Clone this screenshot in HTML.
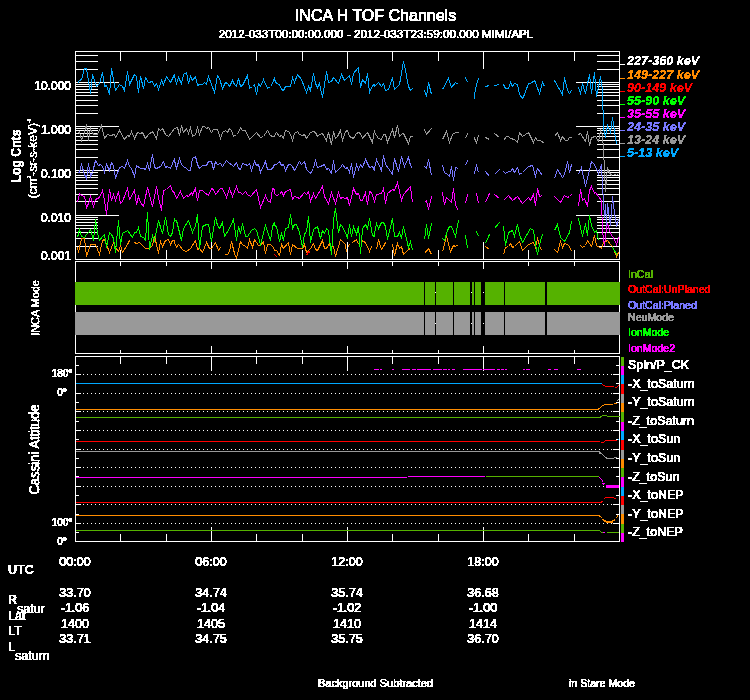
<!DOCTYPE html>
<html lang="en">
<head>
<meta charset="utf-8">
<title>INCA H TOF Channels</title>
<style>
html,body{margin:0;padding:0;background:#000;}
body{width:750px;height:700px;overflow:hidden;}
svg{display:block;shape-rendering:crispEdges;text-rendering:optimizeSpeed;}
text{font-family:"Liberation Sans",sans-serif;fill:#fff;stroke:#fff;stroke-width:0.6px;filter:url(#na);}
.t16{font-size:16px;}
.t125{font-size:12.5px;}
.t13{font-size:13.1px;}
.t12{font-size:12px;}
.t115{font-size:11.7px;}
.t11{font-size:11px;}
.t105{font-size:10.9px;}
.t10{font-size:10px;}
.t106{font-size:10.6px;}
.rot{stroke-width:0.3px;}
.b12{font-size:12.2px;font-weight:bold;stroke-width:0.2px;}
.bi{font-size:12.6px;font-weight:bold;font-style:italic;stroke-width:0.15px;}
</style>
</head>
<body>
<svg width="750" height="700" viewBox="0 0 750 700">
<defs><filter id="na" x="-5%" y="-20%" width="110%" height="140%" color-interpolation-filters="sRGB"><feComponentTransfer><feFuncA type="discrete" tableValues="0 0 1 1 1"/></feComponentTransfer></filter></defs>
<rect x="0" y="0" width="750" height="700" fill="#000"/>
<g id="p1">
<rect x="75" y="246" width="23" height="1" fill="#ffffff"/>
<rect x="597" y="246" width="23" height="1" fill="#ffffff"/>
<rect x="75" y="238" width="23" height="1" fill="#ffffff"/>
<rect x="597" y="238" width="23" height="1" fill="#ffffff"/>
<rect x="75" y="232" width="23" height="1" fill="#ffffff"/>
<rect x="597" y="232" width="23" height="1" fill="#ffffff"/>
<rect x="75" y="228" width="23" height="1" fill="#ffffff"/>
<rect x="597" y="228" width="23" height="1" fill="#ffffff"/>
<rect x="75" y="225" width="23" height="1" fill="#ffffff"/>
<rect x="597" y="225" width="23" height="1" fill="#ffffff"/>
<rect x="75" y="222" width="23" height="1" fill="#ffffff"/>
<rect x="597" y="222" width="23" height="1" fill="#ffffff"/>
<rect x="75" y="219" width="23" height="1" fill="#ffffff"/>
<rect x="597" y="219" width="23" height="1" fill="#ffffff"/>
<rect x="75" y="217" width="23" height="1" fill="#ffffff"/>
<rect x="597" y="217" width="23" height="1" fill="#ffffff"/>
<rect x="75" y="215" width="44" height="1" fill="#ffffff"/>
<rect x="576" y="215" width="44" height="1" fill="#ffffff"/>
<rect x="75" y="201" width="23" height="1" fill="#ffffff"/>
<rect x="597" y="201" width="23" height="1" fill="#ffffff"/>
<rect x="75" y="194" width="23" height="1" fill="#ffffff"/>
<rect x="597" y="194" width="23" height="1" fill="#ffffff"/>
<rect x="75" y="188" width="23" height="1" fill="#ffffff"/>
<rect x="597" y="188" width="23" height="1" fill="#ffffff"/>
<rect x="75" y="184" width="23" height="1" fill="#ffffff"/>
<rect x="597" y="184" width="23" height="1" fill="#ffffff"/>
<rect x="75" y="180" width="23" height="1" fill="#ffffff"/>
<rect x="597" y="180" width="23" height="1" fill="#ffffff"/>
<rect x="75" y="177" width="23" height="1" fill="#ffffff"/>
<rect x="597" y="177" width="23" height="1" fill="#ffffff"/>
<rect x="75" y="175" width="23" height="1" fill="#ffffff"/>
<rect x="597" y="175" width="23" height="1" fill="#ffffff"/>
<rect x="75" y="172" width="23" height="1" fill="#ffffff"/>
<rect x="597" y="172" width="23" height="1" fill="#ffffff"/>
<rect x="75" y="170" width="44" height="1" fill="#ffffff"/>
<rect x="576" y="170" width="44" height="1" fill="#ffffff"/>
<rect x="75" y="157" width="23" height="1" fill="#ffffff"/>
<rect x="597" y="157" width="23" height="1" fill="#ffffff"/>
<rect x="75" y="149" width="23" height="1" fill="#ffffff"/>
<rect x="597" y="149" width="23" height="1" fill="#ffffff"/>
<rect x="75" y="144" width="23" height="1" fill="#ffffff"/>
<rect x="597" y="144" width="23" height="1" fill="#ffffff"/>
<rect x="75" y="140" width="23" height="1" fill="#ffffff"/>
<rect x="597" y="140" width="23" height="1" fill="#ffffff"/>
<rect x="75" y="136" width="23" height="1" fill="#ffffff"/>
<rect x="597" y="136" width="23" height="1" fill="#ffffff"/>
<rect x="75" y="133" width="23" height="1" fill="#ffffff"/>
<rect x="597" y="133" width="23" height="1" fill="#ffffff"/>
<rect x="75" y="130" width="23" height="1" fill="#ffffff"/>
<rect x="597" y="130" width="23" height="1" fill="#ffffff"/>
<rect x="75" y="128" width="23" height="1" fill="#ffffff"/>
<rect x="597" y="128" width="23" height="1" fill="#ffffff"/>
<rect x="75" y="126" width="44" height="1" fill="#ffffff"/>
<rect x="576" y="126" width="44" height="1" fill="#ffffff"/>
<rect x="75" y="113" width="23" height="1" fill="#ffffff"/>
<rect x="597" y="113" width="23" height="1" fill="#ffffff"/>
<rect x="75" y="105" width="23" height="1" fill="#ffffff"/>
<rect x="597" y="105" width="23" height="1" fill="#ffffff"/>
<rect x="75" y="100" width="23" height="1" fill="#ffffff"/>
<rect x="597" y="100" width="23" height="1" fill="#ffffff"/>
<rect x="75" y="95" width="23" height="1" fill="#ffffff"/>
<rect x="597" y="95" width="23" height="1" fill="#ffffff"/>
<rect x="75" y="92" width="23" height="1" fill="#ffffff"/>
<rect x="597" y="92" width="23" height="1" fill="#ffffff"/>
<rect x="75" y="89" width="23" height="1" fill="#ffffff"/>
<rect x="597" y="89" width="23" height="1" fill="#ffffff"/>
<rect x="75" y="86" width="23" height="1" fill="#ffffff"/>
<rect x="597" y="86" width="23" height="1" fill="#ffffff"/>
<rect x="75" y="84" width="23" height="1" fill="#ffffff"/>
<rect x="597" y="84" width="23" height="1" fill="#ffffff"/>
<rect x="75" y="82" width="44" height="1" fill="#ffffff"/>
<rect x="576" y="82" width="44" height="1" fill="#ffffff"/>
<rect x="75" y="69" width="23" height="1" fill="#ffffff"/>
<rect x="597" y="69" width="23" height="1" fill="#ffffff"/>
<rect x="75" y="61" width="23" height="1" fill="#ffffff"/>
<rect x="597" y="61" width="23" height="1" fill="#ffffff"/>
<rect x="75" y="55" width="23" height="1" fill="#ffffff"/>
<rect x="597" y="55" width="23" height="1" fill="#ffffff"/>
<rect x="75" y="51" width="23" height="1" fill="#ffffff"/>
<rect x="597" y="51" width="23" height="1" fill="#ffffff"/>
<rect x="120" y="51" width="1" height="10" fill="#ffffff"/>
<rect x="120" y="250" width="1" height="10" fill="#ffffff"/>
<rect x="166" y="51" width="1" height="10" fill="#ffffff"/>
<rect x="166" y="250" width="1" height="10" fill="#ffffff"/>
<rect x="211" y="51" width="1" height="18" fill="#ffffff"/>
<rect x="211" y="242" width="1" height="18" fill="#ffffff"/>
<rect x="256" y="51" width="1" height="10" fill="#ffffff"/>
<rect x="256" y="250" width="1" height="10" fill="#ffffff"/>
<rect x="302" y="51" width="1" height="10" fill="#ffffff"/>
<rect x="302" y="250" width="1" height="10" fill="#ffffff"/>
<rect x="347" y="51" width="1" height="18" fill="#ffffff"/>
<rect x="347" y="242" width="1" height="18" fill="#ffffff"/>
<rect x="392" y="51" width="1" height="10" fill="#ffffff"/>
<rect x="392" y="250" width="1" height="10" fill="#ffffff"/>
<rect x="438" y="51" width="1" height="10" fill="#ffffff"/>
<rect x="438" y="250" width="1" height="10" fill="#ffffff"/>
<rect x="483" y="51" width="1" height="18" fill="#ffffff"/>
<rect x="483" y="242" width="1" height="18" fill="#ffffff"/>
<rect x="528" y="51" width="1" height="10" fill="#ffffff"/>
<rect x="528" y="250" width="1" height="10" fill="#ffffff"/>
<rect x="574" y="51" width="1" height="10" fill="#ffffff"/>
<rect x="574" y="250" width="1" height="10" fill="#ffffff"/>
</g>
<g id="data">
<polyline points="77.5,247.5 78.5,252.5 81.5,238.5 84.5,238.5 86.5,256.5 90.5,244.5 95.5,244.5 99.5,254.5 102.5,240.5 104.5,239.5 106.5,244.5 109.5,252.5 113.5,242.5 115.5,247.5 118.5,251.5 120.5,245.5 122.5,252.5 127.5,244.5 129.5,240.5" fill="none" stroke="#ff8c00" stroke-width="1"/>
<polyline points="134.5,242.5 136.5,243.5 139.5,242.5 145.5,248.5 149.5,248.5 152.5,245.5 154.5,236.5 156.5,244.5 158.5,253.5 160.5,241.5 162.5,246.5 165.5,240.5 168.5,239.5 170.5,244.5 172.5,240.5 174.5,240.5 174.5,242.5 176.5,247.5 178.5,244.5 183.5,250.5 186.5,251.5 190.5,248.5 195.5,240.5 197.5,249.5 199.5,248.5 202.5,252.5 206.5,242.5 209.5,248.5 211.5,248.5 215.5,242.5 218.5,250.5 220.5,247.5" fill="none" stroke="#ff8c00" stroke-width="1"/>
<polyline points="224.5,254.5 227.5,254.5 229.5,251.5 231.5,241.5 234.5,253.5 236.5,258.5 240.5,241.5 242.5,244.5 245.5,246.5 247.5,248.5 249.5,239.5 252.5,247.5 254.5,239.5 258.5,245.5 260.5,245.5 263.5,241.5 265.5,253.5 267.5,244.5 270.5,244.5 272.5,246.5 274.5,249.5 274.5,250.5 276.5,250.5 279.5,255.5 281.5,244.5 283.5,248.5 288.5,242.5 290.5,254.5 292.5,244.5 297.5,248.5 302.5,248.5 304.5,244.5 306.5,252.5 310.5,248.5 313.5,243.5 315.5,249.5 317.5,250.5 322.5,240.5 324.5,248.5 326.5,248.5 329.5,243.5 330.5,247.5 333.5,246.5 335.5,256.5 340.5,239.5 345.5,244.5 346.5,252.5" fill="none" stroke="#ff8c00" stroke-width="1"/>
<polyline points="347.5,247.5 349.5,244.5" fill="none" stroke="#ff8c00" stroke-width="1"/>
<polyline points="352.5,242.5 356.5,239.5 358.5,244.5" fill="none" stroke="#ff8c00" stroke-width="1"/>
<polyline points="361.5,240.5 365.5,242.5 369.5,251.5 371.5,246.5" fill="none" stroke="#ff8c00" stroke-width="1"/>
<polyline points="376.5,249.5 378.5,239.5 381.5,249.5 383.5,246.5 385.5,242.5" fill="none" stroke="#ff8c00" stroke-width="1"/>
<polyline points="392.5,244.5 394.5,255.5 397.5,243.5 399.5,248.5 401.5,246.5 403.5,254.5 408.5,249.5 410.5,248.5" fill="none" stroke="#ff8c00" stroke-width="1"/>
<polyline points="424.5,253.5 428.5,248.5 431.5,254.5" fill="none" stroke="#ff8c00" stroke-width="1"/>
<polyline points="442.5,251.5 446.5,236.5 450.5,251.5 453.5,245.5 455.5,246.5 458.5,244.5" fill="none" stroke="#ff8c00" stroke-width="1"/>
<polyline points="485.5,246.5 489.5,249.5" fill="none" stroke="#ff8c00" stroke-width="1"/>
<polyline points="503.5,254.5 505.5,247.5 508.5,246.5 510.5,243.5 512.5,247.5 514.5,246.5 519.5,241.5 522.5,250.5 528.5,244.5 533.5,242.5 535.5,247.5 537.5,238.5 540.5,248.5 542.5,250.5" fill="none" stroke="#ff8c00" stroke-width="1"/>
<polyline points="554.5,249.5 557.5,252.5 560.5,241.5 562.5,247.5 564.5,243.5 567.5,244.5 569.5,246.5 571.5,251.5" fill="none" stroke="#ff8c00" stroke-width="1"/>
<polyline points="580.5,245.5 582.5,247.5 585.5,245.5 587.5,240.5 591.5,246.5 594.5,235.5 596.5,245.5 601.5,248.5 603.5,242.5 607.5,240.5 610.5,244.5 612.5,246.5 616.5,256.5 618.5,252.5" fill="none" stroke="#ff8c00" stroke-width="1"/>
<polyline points="274.5,254.5 277.5,257.5" fill="none" stroke="#ff0000" stroke-width="1"/>
<polyline points="306.5,255.5 308.5,251.5 310.5,252.5" fill="none" stroke="#ff0000" stroke-width="1"/>
<polyline points="77.5,237.5 79.5,229.5 81.5,236.5 84.5,237.5 86.5,234.5 88.5,232.5 90.5,229.5 93.5,240.5 95.5,219.5 97.5,233.5 99.5,240.5 102.5,236.5 104.5,234.5 106.5,247.5 109.5,232.5 111.5,234.5 113.5,238.5 115.5,252.5 118.5,220.5 120.5,244.5 122.5,233.5 127.5,230.5 132.5,237.5 134.5,232.5 136.5,232.5 138.5,227.5 140.5,236.5 143.5,237.5 145.5,240.5 147.5,212.5 149.5,249.5 152.5,235.5 154.5,240.5 158.5,220.5 162.5,233.5 165.5,217.5 168.5,234.5 170.5,236.5 172.5,232.5 174.5,218.5 174.5,220.5 176.5,220.5 181.5,240.5 183.5,228.5 188.5,220.5 192.5,232.5 195.5,225.5 197.5,214.5 199.5,248.5 202.5,226.5 206.5,224.5 208.5,224.5 211.5,241.5 215.5,217.5 217.5,225.5 219.5,228.5 222.5,222.5 224.5,236.5 229.5,228.5 233.5,219.5 236.5,240.5 238.5,226.5 240.5,233.5 242.5,223.5 245.5,236.5 247.5,236.5 251.5,230.5 254.5,228.5 256.5,230.5 260.5,244.5 265.5,225.5 270.5,240.5 272.5,226.5 274.5,222.5 274.5,225.5 276.5,226.5 279.5,241.5 281.5,233.5 283.5,240.5 285.5,228.5 288.5,227.5 290.5,214.5 292.5,228.5 294.5,224.5 296.5,224.5 299.5,232.5 302.5,247.5 304.5,233.5 306.5,232.5 308.5,216.5 310.5,242.5 313.5,229.5 317.5,226.5 320.5,238.5 322.5,230.5 324.5,233.5 326.5,228.5 328.5,230.5 331.5,254.5 333.5,220.5 335.5,208.5 338.5,232.5 340.5,224.5 342.5,226.5 347.5,237.5 349.5,224.5 351.5,236.5 353.5,226.5 356.5,234.5 358.5,226.5 360.5,253.5 362.5,228.5 365.5,224.5 367.5,228.5 369.5,218.5 372.5,235.5 374.5,236.5 374.5,233.5 376.5,223.5 378.5,228.5 381.5,222.5 383.5,222.5 385.5,226.5 387.5,239.5 392.5,218.5 394.5,236.5 397.5,236.5 399.5,232.5 401.5,238.5 403.5,226.5 408.5,247.5 410.5,241.5 412.5,250.5" fill="none" stroke="#00ff00" stroke-width="1"/>
<polyline points="424.5,239.5 426.5,224.5 428.5,238.5 431.5,223.5" fill="none" stroke="#00ff00" stroke-width="1"/>
<polyline points="442.5,238.5 444.5,240.5 447.5,230.5 449.5,226.5 451.5,226.5 455.5,236.5 458.5,220.5" fill="none" stroke="#00ff00" stroke-width="1"/>
<polyline points="465.5,235.5 467.5,248.5" fill="none" stroke="#00ff00" stroke-width="1"/>
<polyline points="476.5,231.5 478.5,236.5" fill="none" stroke="#00ff00" stroke-width="1"/>
<polyline points="485.5,243.5 489.5,234.5" fill="none" stroke="#00ff00" stroke-width="1"/>
<polyline points="494.5,228.5 499.5,222.5" fill="none" stroke="#00ff00" stroke-width="1"/>
<polyline points="503.5,226.5 505.5,245.5 508.5,232.5 512.5,230.5 514.5,236.5 517.5,224.5 519.5,234.5 522.5,242.5 530.5,228.5 533.5,230.5 535.5,244.5 537.5,254.5 540.5,240.5 542.5,234.5" fill="none" stroke="#00ff00" stroke-width="1"/>
<polyline points="554.5,230.5 557.5,224.5 560.5,237.5 564.5,241.5 569.5,232.5 571.5,221.5" fill="none" stroke="#00ff00" stroke-width="1"/>
<polyline points="578.5,218.5 582.5,236.5 585.5,223.5 587.5,235.5 589.5,215.5 591.5,225.5 594.5,232.5 596.5,230.5 598.5,240.5" fill="none" stroke="#00ff00" stroke-width="1"/>
<polyline points="612.5,247.5 617.5,255.5" fill="none" stroke="#00ff00" stroke-width="1"/>
<polyline points="77.5,202.5 79.5,193.5 81.5,195.5 84.5,196.5 86.5,207.5 88.5,203.5 90.5,196.5 93.5,206.5 95.5,199.5 97.5,198.5 99.5,197.5 102.5,190.5 104.5,200.5 106.5,214.5 109.5,189.5 111.5,200.5 113.5,194.5 115.5,200.5 118.5,191.5 120.5,203.5 122.5,201.5 127.5,188.5 129.5,199.5 134.5,190.5 136.5,204.5 138.5,196.5 140.5,202.5 143.5,206.5 147.5,187.5 152.5,206.5 156.5,186.5 158.5,197.5 161.5,210.5 163.5,190.5 166.5,189.5 170.5,185.5 172.5,191.5 174.5,192.5 174.5,193.5 176.5,198.5 180.5,191.5 183.5,198.5 186.5,195.5 188.5,196.5 191.5,192.5 192.5,194.5 195.5,188.5 197.5,200.5 199.5,190.5 202.5,190.5 204.5,192.5 208.5,195.5 211.5,188.5 213.5,189.5 215.5,194.5 220.5,188.5 222.5,188.5 226.5,197.5 229.5,188.5 232.5,196.5 236.5,186.5 238.5,192.5 240.5,192.5 242.5,194.5 245.5,191.5 247.5,194.5 250.5,196.5 256.5,189.5 260.5,207.5 265.5,195.5 267.5,200.5 270.5,202.5 272.5,188.5 274.5,189.5 274.5,193.5 276.5,195.5 279.5,194.5 281.5,191.5 283.5,195.5 285.5,191.5 290.5,189.5 292.5,199.5 294.5,196.5 297.5,197.5 299.5,198.5 304.5,192.5 306.5,194.5 308.5,191.5 310.5,201.5 313.5,193.5 315.5,198.5 322.5,186.5 324.5,196.5 328.5,203.5 331.5,192.5 335.5,203.5 338.5,192.5 340.5,198.5 342.5,197.5 345.5,198.5 347.5,197.5 349.5,205.5 353.5,188.5 356.5,194.5 358.5,193.5 360.5,200.5 362.5,200.5 365.5,192.5 367.5,204.5 369.5,191.5 371.5,192.5 374.5,201.5 376.5,194.5 381.5,193.5 383.5,188.5 385.5,203.5 387.5,193.5 392.5,189.5 394.5,190.5 397.5,182.5 401.5,200.5 403.5,194.5 410.5,186.5 412.5,202.5" fill="none" stroke="#ff00ff" stroke-width="1"/>
<polyline points="424.5,202.5 426.5,200.5 428.5,209.5 431.5,196.5" fill="none" stroke="#ff00ff" stroke-width="1"/>
<polyline points="442.5,192.5 444.5,204.5 446.5,197.5 451.5,202.5 453.5,188.5 455.5,205.5 458.5,210.5" fill="none" stroke="#ff00ff" stroke-width="1"/>
<polyline points="465.5,203.5 467.5,194.5" fill="none" stroke="#ff00ff" stroke-width="1"/>
<polyline points="476.5,193.5 478.5,203.5" fill="none" stroke="#ff00ff" stroke-width="1"/>
<polyline points="485.5,202.5 489.5,193.5" fill="none" stroke="#ff00ff" stroke-width="1"/>
<polyline points="494.5,194.5 499.5,198.5" fill="none" stroke="#ff00ff" stroke-width="1"/>
<polyline points="503.5,200.5 508.5,195.5 512.5,200.5 517.5,196.5 522.5,203.5 528.5,197.5 530.5,200.5 533.5,194.5 535.5,205.5 537.5,188.5 539.5,196.5 542.5,195.5" fill="none" stroke="#ff00ff" stroke-width="1"/>
<polyline points="554.5,196.5 560.5,202.5 564.5,195.5 567.5,197.5 569.5,196.5 571.5,194.5" fill="none" stroke="#ff00ff" stroke-width="1"/>
<polyline points="578.5,206.5 580.5,189.5 582.5,200.5 584.5,198.5 587.5,206.5 589.5,190.5 591.5,186.5 594.5,193.5 595.5,192.5 598.5,196.5 601.5,200.5 602.5,231.5 604.5,245.5 606.5,228.5 607.5,223.5 610.5,233.5 614.5,239.5 616.5,244.5 618.5,237.5" fill="none" stroke="#ff00ff" stroke-width="1"/>
<polyline points="77.5,172.5 79.5,172.5 81.5,164.5 84.5,174.5 86.5,178.5 88.5,163.5 90.5,176.5 92.5,172.5 95.5,160.5 98.5,165.5 100.5,164.5 102.5,166.5 104.5,172.5 106.5,164.5 109.5,170.5 111.5,162.5 113.5,165.5 115.5,178.5 119.5,167.5 122.5,166.5 124.5,168.5 127.5,160.5 129.5,166.5 131.5,168.5 134.5,176.5 136.5,165.5 140.5,168.5 143.5,168.5 145.5,169.5 147.5,163.5 149.5,170.5 152.5,154.5 154.5,167.5 156.5,168.5 160.5,166.5 163.5,161.5 165.5,167.5 167.5,166.5 170.5,168.5 174.5,158.5 174.5,160.5 176.5,168.5 179.5,158.5 181.5,164.5 183.5,166.5 186.5,168.5 188.5,170.5 190.5,170.5 192.5,158.5 195.5,156.5 197.5,164.5 199.5,168.5 202.5,165.5 206.5,165.5 208.5,161.5 211.5,161.5 213.5,169.5 215.5,161.5 217.5,164.5 220.5,163.5 222.5,166.5 226.5,160.5 229.5,163.5 231.5,164.5 233.5,166.5 236.5,162.5 238.5,168.5 240.5,169.5 242.5,163.5 245.5,164.5 247.5,165.5 249.5,163.5 251.5,170.5 254.5,161.5 256.5,165.5 258.5,164.5 260.5,172.5 265.5,161.5 267.5,169.5 270.5,169.5 272.5,168.5 274.5,164.5 276.5,164.5 279.5,161.5 281.5,165.5 283.5,164.5 285.5,170.5 288.5,164.5 290.5,164.5 292.5,166.5 294.5,170.5 299.5,161.5 301.5,164.5 304.5,161.5 306.5,169.5 310.5,173.5 313.5,168.5 315.5,160.5 317.5,167.5 320.5,166.5 324.5,164.5 326.5,169.5 328.5,168.5 331.5,173.5 333.5,160.5 335.5,172.5 337.5,170.5 340.5,167.5 342.5,164.5 345.5,168.5 347.5,167.5 349.5,172.5 351.5,163.5 353.5,177.5 356.5,164.5 358.5,169.5 360.5,164.5 362.5,167.5 365.5,159.5 369.5,167.5 372.5,166.5 374.5,170.5 374.5,168.5 376.5,159.5 381.5,170.5 383.5,155.5 385.5,164.5 388.5,168.5 392.5,174.5 394.5,158.5 398.5,171.5 401.5,156.5 404.5,166.5 408.5,157.5 410.5,165.5 412.5,168.5" fill="none" stroke="#7878ff" stroke-width="1"/>
<polyline points="424.5,166.5 426.5,168.5 428.5,159.5 431.5,175.5" fill="none" stroke="#7878ff" stroke-width="1"/>
<polyline points="442.5,165.5 444.5,172.5 447.5,174.5 449.5,176.5 451.5,166.5 453.5,180.5 455.5,167.5 458.5,168.5" fill="none" stroke="#7878ff" stroke-width="1"/>
<polyline points="465.5,165.5 467.5,160.5" fill="none" stroke="#7878ff" stroke-width="1"/>
<polyline points="474.5,171.5 474.5,173.5 474.5,172.5 476.5,165.5 478.5,172.5" fill="none" stroke="#7878ff" stroke-width="1"/>
<polyline points="485.5,171.5 489.5,176.5" fill="none" stroke="#7878ff" stroke-width="1"/>
<polyline points="494.5,174.5 499.5,169.5" fill="none" stroke="#7878ff" stroke-width="1"/>
<polyline points="503.5,171.5 505.5,173.5 508.5,171.5 510.5,171.5 512.5,168.5 514.5,172.5 517.5,167.5 519.5,174.5 522.5,172.5 528.5,166.5 532.5,165.5 535.5,176.5 537.5,168.5 542.5,175.5" fill="none" stroke="#7878ff" stroke-width="1"/>
<polyline points="554.5,178.5 557.5,169.5 562.5,177.5 564.5,174.5 567.5,161.5 569.5,172.5 571.5,164.5" fill="none" stroke="#7878ff" stroke-width="1"/>
<polyline points="578.5,174.5 581.5,167.5 585.5,186.5 591.5,161.5 594.5,164.5 598.5,173.5 601.5,164.5 602.5,186.5 604.5,217.5 605.5,204.5 606.5,225.5 607.5,203.5 610.5,225.5 612.5,196.5 614.5,212.5 616.5,226.5 618.5,219.5" fill="none" stroke="#7878ff" stroke-width="1"/>
<polyline points="77.5,133.5 79.5,131.5 81.5,140.5 84.5,132.5 86.5,124.5 88.5,140.5 90.5,128.5 92.5,133.5 94.5,134.5 97.5,134.5 101.5,125.5 104.5,138.5 107.5,134.5 110.5,135.5 114.5,134.5 115.5,137.5 119.5,130.5 124.5,139.5 127.5,135.5 129.5,136.5 131.5,131.5 134.5,138.5 137.5,132.5 140.5,133.5 142.5,132.5 145.5,138.5 148.5,134.5 152.5,131.5 156.5,138.5 158.5,128.5 160.5,130.5 162.5,128.5 165.5,134.5 168.5,136.5 174.5,128.5 177.5,127.5 179.5,135.5 181.5,125.5 183.5,132.5 186.5,128.5 188.5,133.5 190.5,127.5 192.5,136.5 195.5,134.5 197.5,127.5 199.5,134.5 202.5,126.5 204.5,126.5 206.5,128.5 208.5,127.5 211.5,132.5 213.5,129.5 217.5,129.5 220.5,138.5 222.5,132.5 225.5,130.5 227.5,132.5 229.5,128.5 231.5,130.5 233.5,136.5 236.5,134.5 238.5,132.5 240.5,127.5 242.5,130.5 245.5,130.5 249.5,139.5 256.5,132.5 260.5,137.5 263.5,136.5 267.5,130.5 270.5,135.5 272.5,136.5 274.5,136.5 274.5,135.5 276.5,132.5 279.5,136.5 281.5,135.5 283.5,138.5 285.5,130.5 288.5,131.5 290.5,134.5 292.5,140.5 294.5,133.5 297.5,131.5 299.5,134.5 302.5,135.5 304.5,134.5 306.5,138.5 310.5,132.5 313.5,131.5 315.5,132.5 317.5,136.5 319.5,134.5 322.5,133.5 326.5,140.5 328.5,132.5 331.5,144.5 333.5,131.5 335.5,138.5 337.5,136.5 340.5,130.5 342.5,140.5 345.5,131.5 347.5,130.5 349.5,136.5 351.5,137.5 353.5,138.5 356.5,133.5 358.5,132.5 360.5,133.5 362.5,138.5 367.5,132.5 369.5,136.5 372.5,142.5 374.5,130.5 374.5,132.5 378.5,138.5 381.5,139.5 383.5,134.5 385.5,134.5 387.5,142.5 392.5,129.5 394.5,137.5 397.5,125.5 399.5,136.5 402.5,133.5 403.5,133.5 408.5,143.5 410.5,136.5 412.5,136.5" fill="none" stroke="#999999" stroke-width="1"/>
<polyline points="424.5,129.5 426.5,134.5 431.5,128.5" fill="none" stroke="#999999" stroke-width="1"/>
<polyline points="442.5,139.5 446.5,131.5 449.5,142.5 452.5,134.5 455.5,132.5 458.5,132.5" fill="none" stroke="#999999" stroke-width="1"/>
<polyline points="465.5,138.5 467.5,133.5" fill="none" stroke="#999999" stroke-width="1"/>
<polyline points="474.5,136.5 474.5,138.5 476.5,142.5 478.5,135.5" fill="none" stroke="#999999" stroke-width="1"/>
<polyline points="485.5,137.5 489.5,139.5" fill="none" stroke="#999999" stroke-width="1"/>
<polyline points="494.5,133.5 499.5,137.5" fill="none" stroke="#999999" stroke-width="1"/>
<polyline points="503.5,140.5 506.5,136.5 508.5,136.5 510.5,138.5 514.5,139.5 517.5,142.5 519.5,132.5 522.5,136.5 528.5,132.5 533.5,142.5 535.5,137.5 537.5,140.5 540.5,140.5 544.5,143.5" fill="none" stroke="#999999" stroke-width="1"/>
<polyline points="554.5,136.5 557.5,132.5 560.5,140.5 562.5,136.5 565.5,140.5 567.5,140.5 569.5,137.5 571.5,137.5" fill="none" stroke="#999999" stroke-width="1"/>
<polyline points="578.5,134.5 580.5,133.5 585.5,141.5 587.5,131.5 589.5,145.5 591.5,137.5 595.5,136.5 598.5,141.5 600.5,130.5 602.5,135.5 603.5,150.5 604.5,169.5 605.5,191.5 606.5,178.5 607.5,168.5 610.5,174.5 612.5,175.5" fill="none" stroke="#999999" stroke-width="1"/>
<polyline points="613.5,174.5 615.5,174.5" fill="none" stroke="#999999" stroke-width="1"/>
<polyline points="616.5,174.5 617.5,174.5" fill="none" stroke="#999999" stroke-width="1"/>
<polyline points="77.5,83.5 79.5,80.5 81.5,79.5 84.5,68.5 86.5,68.5 88.5,80.5 90.5,93.5 92.5,74.5 96.5,86.5 99.5,83.5 102.5,72.5 104.5,86.5 106.5,85.5 109.5,94.5 111.5,68.5 115.5,90.5 119.5,84.5 122.5,86.5 124.5,90.5 127.5,71.5 129.5,84.5 134.5,74.5 136.5,76.5 138.5,92.5 140.5,76.5 143.5,88.5 145.5,77.5 148.5,82.5 152.5,81.5 154.5,86.5 156.5,83.5 158.5,89.5 161.5,80.5 163.5,84.5 166.5,76.5 170.5,82.5 174.5,74.5 174.5,76.5 176.5,83.5 178.5,77.5 181.5,83.5 183.5,74.5 186.5,72.5 188.5,83.5 190.5,76.5 192.5,80.5 195.5,76.5 197.5,85.5 199.5,84.5 202.5,84.5 204.5,82.5 206.5,84.5 208.5,76.5 211.5,84.5 214.5,92.5 217.5,75.5 219.5,78.5 222.5,88.5 225.5,82.5 227.5,83.5 229.5,86.5 232.5,80.5 234.5,84.5 236.5,86.5 238.5,78.5 240.5,86.5 242.5,85.5 247.5,75.5 249.5,88.5 252.5,86.5 254.5,84.5 256.5,94.5 258.5,83.5 260.5,86.5 263.5,79.5 267.5,88.5 270.5,86.5 272.5,83.5 274.5,77.5 274.5,79.5 276.5,83.5 279.5,84.5 281.5,89.5 283.5,90.5 285.5,86.5 290.5,86.5 292.5,77.5 294.5,82.5 297.5,74.5 301.5,79.5 306.5,92.5 308.5,86.5 310.5,90.5 313.5,73.5 315.5,83.5 317.5,87.5 319.5,83.5 322.5,97.5 326.5,71.5 328.5,82.5 331.5,81.5 333.5,77.5 338.5,83.5 341.5,74.5 344.5,80.5 349.5,75.5 351.5,84.5 353.5,73.5 358.5,67.5 360.5,87.5 362.5,79.5 365.5,83.5 367.5,73.5 369.5,92.5 372.5,85.5 374.5,84.5 374.5,86.5 378.5,82.5 381.5,86.5 383.5,83.5 385.5,90.5 388.5,89.5 392.5,77.5 394.5,89.5 397.5,86.5 399.5,84.5 403.5,61.5 405.5,70.5 408.5,86.5 410.5,90.5 412.5,88.5" fill="none" stroke="#00a8ff" stroke-width="1"/>
<polyline points="424.5,90.5 426.5,96.5 428.5,82.5 431.5,94.5" fill="none" stroke="#00a8ff" stroke-width="1"/>
<polyline points="442.5,89.5 448.5,78.5 451.5,87.5 455.5,82.5 458.5,84.5" fill="none" stroke="#00a8ff" stroke-width="1"/>
<polyline points="465.5,77.5 467.5,82.5" fill="none" stroke="#00a8ff" stroke-width="1"/>
<polyline points="474.5,94.5 474.5,98.5 474.5,94.5 476.5,84.5 478.5,78.5" fill="none" stroke="#00a8ff" stroke-width="1"/>
<polyline points="485.5,86.5 489.5,85.5" fill="none" stroke="#00a8ff" stroke-width="1"/>
<polyline points="494.5,85.5 499.5,84.5" fill="none" stroke="#00a8ff" stroke-width="1"/>
<polyline points="503.5,84.5 505.5,88.5 508.5,88.5 510.5,82.5 512.5,86.5 514.5,83.5 517.5,84.5 519.5,94.5 522.5,98.5 524.5,94.5 528.5,83.5 530.5,83.5 534.5,80.5 535.5,82.5 539.5,93.5 542.5,82.5 544.5,86.5" fill="none" stroke="#00a8ff" stroke-width="1"/>
<polyline points="554.5,80.5 562.5,94.5 564.5,77.5 567.5,90.5 569.5,93.5 571.5,90.5" fill="none" stroke="#00a8ff" stroke-width="1"/>
<polyline points="578.5,87.5 580.5,93.5 582.5,83.5 585.5,93.5 589.5,74.5 591.5,93.5 594.5,72.5 596.5,96.5 600.5,76.5 602.5,90.5 603.5,128.5 605.5,137.5 607.5,125.5 610.5,132.5 612.5,117.5 614.5,131.5 616.5,144.5" fill="none" stroke="#00a8ff" stroke-width="1"/>
</g>
<rect x="75" y="51" width="545" height="1" fill="#ffffff"/>
<rect x="75" y="259" width="545" height="1" fill="#ffffff"/>
<rect x="75" y="51" width="1" height="209" fill="#ffffff"/>
<rect x="619" y="51" width="1" height="209" fill="#ffffff"/>
<rect x="620" y="64" width="5" height="1" fill="#ffffff"/>
<text x="627" y="65" class="bi" style="fill:#ffffff;stroke:#ffffff">227-360 keV</text>
<rect x="620" y="78" width="5" height="1" fill="#ff8c00"/>
<text x="627" y="79" class="bi" style="fill:#ff8c00;stroke:#ff8c00">149-227 keV</text>
<rect x="620" y="91" width="5" height="1" fill="#ff0000"/>
<text x="627" y="92" class="bi" style="fill:#ff0000;stroke:#ff0000">90-149 keV</text>
<rect x="620" y="104" width="5" height="1" fill="#00ff00"/>
<text x="627" y="105" class="bi" style="fill:#00ff00;stroke:#00ff00">55-90 keV</text>
<rect x="620" y="117" width="5" height="1" fill="#ff00ff"/>
<text x="627" y="118" class="bi" style="fill:#ff00ff;stroke:#ff00ff">35-55 keV</text>
<rect x="620" y="130" width="5" height="1" fill="#7878ff"/>
<text x="627" y="131" class="bi" style="fill:#7878ff;stroke:#7878ff">24-35 keV</text>
<rect x="620" y="143" width="5" height="1" fill="#999999"/>
<text x="627" y="144" class="bi" style="fill:#999999;stroke:#999999">13-24 keV</text>
<rect x="620" y="156" width="5" height="1" fill="#00a8ff"/>
<text x="627" y="157" class="bi" style="fill:#00a8ff;stroke:#00a8ff">5-13 keV</text>
<text x="71" y="90" class="t12" text-anchor="end">10.000</text>
<text x="71" y="134" class="t12" text-anchor="end">1.000</text>
<text x="71" y="178" class="t12" text-anchor="end">0.100</text>
<text x="71" y="222" class="t12" text-anchor="end">0.010</text>
<text x="71" y="260" class="t12" text-anchor="end">0.001</text>
<text transform="translate(20.7,156) rotate(-90) scale(1,1.16)" class="b12" text-anchor="middle">Log Cnts</text>
<text transform="translate(37,158.5) rotate(-90) scale(1,1.08)" class="t12 rot" text-anchor="middle">(cm<tspan dy="-6" font-size="5">2</tspan><tspan dy="6">-sr-s-keV)</tspan><tspan dy="-6" font-size="5">-1</tspan></text>
<rect x="75" y="261" width="545" height="1" fill="#ffffff"/>
<rect x="75" y="353" width="545" height="1" fill="#ffffff"/>
<rect x="75" y="261" width="1" height="93" fill="#ffffff"/>
<rect x="619" y="261" width="1" height="93" fill="#ffffff"/>
<rect x="120" y="261" width="1" height="5" fill="#ffffff"/>
<rect x="120" y="350" width="1" height="4" fill="#ffffff"/>
<rect x="166" y="261" width="1" height="5" fill="#ffffff"/>
<rect x="166" y="350" width="1" height="4" fill="#ffffff"/>
<rect x="211" y="261" width="1" height="8" fill="#ffffff"/>
<rect x="211" y="346" width="1" height="8" fill="#ffffff"/>
<rect x="256" y="261" width="1" height="5" fill="#ffffff"/>
<rect x="256" y="350" width="1" height="4" fill="#ffffff"/>
<rect x="302" y="261" width="1" height="5" fill="#ffffff"/>
<rect x="302" y="350" width="1" height="4" fill="#ffffff"/>
<rect x="347" y="261" width="1" height="8" fill="#ffffff"/>
<rect x="347" y="346" width="1" height="8" fill="#ffffff"/>
<rect x="392" y="261" width="1" height="5" fill="#ffffff"/>
<rect x="392" y="350" width="1" height="4" fill="#ffffff"/>
<rect x="438" y="261" width="1" height="5" fill="#ffffff"/>
<rect x="438" y="350" width="1" height="4" fill="#ffffff"/>
<rect x="483" y="261" width="1" height="8" fill="#ffffff"/>
<rect x="483" y="346" width="1" height="8" fill="#ffffff"/>
<rect x="528" y="261" width="1" height="5" fill="#ffffff"/>
<rect x="528" y="350" width="1" height="4" fill="#ffffff"/>
<rect x="574" y="261" width="1" height="5" fill="#ffffff"/>
<rect x="574" y="350" width="1" height="4" fill="#ffffff"/>
<rect x="75" y="282" width="545" height="23" fill="#55b200"/>
<rect x="75" y="312" width="545" height="23" fill="#999999"/>
<rect x="424" y="282" width="1" height="23" fill="#000"/>
<rect x="424" y="312" width="1" height="23" fill="#000"/>
<rect x="435" y="282" width="1" height="23" fill="#000"/>
<rect x="435" y="312" width="1" height="23" fill="#000"/>
<rect x="453" y="282" width="1" height="23" fill="#000"/>
<rect x="453" y="312" width="1" height="23" fill="#000"/>
<rect x="470" y="282" width="2" height="23" fill="#000"/>
<rect x="470" y="312" width="2" height="23" fill="#000"/>
<rect x="474" y="282" width="1" height="23" fill="#000"/>
<rect x="474" y="312" width="1" height="23" fill="#000"/>
<rect x="481" y="282" width="4" height="23" fill="#000"/>
<rect x="481" y="312" width="4" height="23" fill="#000"/>
<rect x="504" y="282" width="1" height="23" fill="#000"/>
<rect x="504" y="312" width="1" height="23" fill="#000"/>
<rect x="545" y="282" width="2" height="23" fill="#000"/>
<rect x="545" y="312" width="2" height="23" fill="#000"/>
<rect x="435" y="292" width="1" height="1" fill="#fff"/>
<rect x="435" y="323" width="1" height="1" fill="#fff"/>
<rect x="471" y="292" width="1" height="1" fill="#fff"/>
<rect x="471" y="323" width="1" height="1" fill="#fff"/>
<rect x="483" y="292" width="1" height="1" fill="#fff"/>
<rect x="483" y="323" width="1" height="1" fill="#fff"/>
<text x="628" y="277.5" class="t106" style="fill:#55b200;stroke:#55b200">InCal</text>
<text x="628" y="292.5" class="t106" style="fill:#ff0000;stroke:#ff0000">OutCal:UnPlaned</text>
<text x="628" y="308.5" class="t106" style="fill:#7878ff;stroke:#7878ff">OutCal:Planed</text>
<text x="628" y="320.5" class="t106" style="fill:#999999;stroke:#999999">NeuMode</text>
<text x="628" y="335.5" class="t106" style="fill:#00ff00;stroke:#00ff00">IonMode</text>
<text x="628" y="351.5" class="t106" style="fill:#ff00ff;stroke:#ff00ff">IonMode2</text>
<text transform="translate(39.2,308) rotate(-90) scale(1,1.06)" class="t105 rot" text-anchor="middle">INCA Mode</text>
<rect x="75" y="356" width="545" height="1" fill="#ffffff"/>
<rect x="75" y="541" width="545" height="1" fill="#ffffff"/>
<rect x="75" y="356" width="1" height="186" fill="#ffffff"/>
<rect x="619" y="356" width="1" height="186" fill="#ffffff"/>
<rect x="120" y="356" width="1" height="8" fill="#ffffff"/>
<rect x="120" y="534" width="1" height="8" fill="#ffffff"/>
<rect x="166" y="356" width="1" height="8" fill="#ffffff"/>
<rect x="166" y="534" width="1" height="8" fill="#ffffff"/>
<rect x="211" y="356" width="1" height="15" fill="#ffffff"/>
<rect x="211" y="527" width="1" height="15" fill="#ffffff"/>
<rect x="256" y="356" width="1" height="8" fill="#ffffff"/>
<rect x="256" y="534" width="1" height="8" fill="#ffffff"/>
<rect x="302" y="356" width="1" height="8" fill="#ffffff"/>
<rect x="302" y="534" width="1" height="8" fill="#ffffff"/>
<rect x="347" y="356" width="1" height="15" fill="#ffffff"/>
<rect x="347" y="527" width="1" height="15" fill="#ffffff"/>
<rect x="392" y="356" width="1" height="8" fill="#ffffff"/>
<rect x="392" y="534" width="1" height="8" fill="#ffffff"/>
<rect x="438" y="356" width="1" height="8" fill="#ffffff"/>
<rect x="438" y="534" width="1" height="8" fill="#ffffff"/>
<rect x="483" y="356" width="1" height="15" fill="#ffffff"/>
<rect x="483" y="527" width="1" height="15" fill="#ffffff"/>
<rect x="528" y="356" width="1" height="8" fill="#ffffff"/>
<rect x="528" y="534" width="1" height="8" fill="#ffffff"/>
<rect x="574" y="356" width="1" height="8" fill="#ffffff"/>
<rect x="574" y="534" width="1" height="8" fill="#ffffff"/>
<rect x="75" y="374" width="6" height="1" fill="#ffffff"/>
<rect x="613" y="374" width="7" height="1" fill="#ffffff"/>
<line x1="83" y1="374.5" x2="613" y2="374.5" stroke="#fff" stroke-width="1" stroke-dasharray="1 3"/>
<rect x="75" y="393" width="6" height="1" fill="#ffffff"/>
<rect x="613" y="393" width="7" height="1" fill="#ffffff"/>
<line x1="83" y1="393.5" x2="613" y2="393.5" stroke="#fff" stroke-width="1" stroke-dasharray="1 3"/>
<rect x="75" y="411" width="6" height="1" fill="#ffffff"/>
<rect x="613" y="411" width="7" height="1" fill="#ffffff"/>
<line x1="83" y1="411.5" x2="613" y2="411.5" stroke="#fff" stroke-width="1" stroke-dasharray="1 3"/>
<rect x="75" y="430" width="6" height="1" fill="#ffffff"/>
<rect x="613" y="430" width="7" height="1" fill="#ffffff"/>
<line x1="83" y1="430.5" x2="613" y2="430.5" stroke="#fff" stroke-width="1" stroke-dasharray="1 3"/>
<rect x="75" y="449" width="6" height="1" fill="#ffffff"/>
<rect x="613" y="449" width="7" height="1" fill="#ffffff"/>
<line x1="83" y1="449.5" x2="613" y2="449.5" stroke="#fff" stroke-width="1" stroke-dasharray="1 3"/>
<rect x="75" y="467" width="6" height="1" fill="#ffffff"/>
<rect x="613" y="467" width="7" height="1" fill="#ffffff"/>
<line x1="83" y1="467.5" x2="613" y2="467.5" stroke="#fff" stroke-width="1" stroke-dasharray="1 3"/>
<rect x="75" y="486" width="6" height="1" fill="#ffffff"/>
<rect x="613" y="486" width="7" height="1" fill="#ffffff"/>
<line x1="83" y1="486.5" x2="613" y2="486.5" stroke="#fff" stroke-width="1" stroke-dasharray="1 3"/>
<rect x="75" y="504" width="6" height="1" fill="#ffffff"/>
<rect x="613" y="504" width="7" height="1" fill="#ffffff"/>
<line x1="83" y1="504.5" x2="613" y2="504.5" stroke="#fff" stroke-width="1" stroke-dasharray="1 3"/>
<rect x="75" y="523" width="6" height="1" fill="#ffffff"/>
<rect x="613" y="523" width="7" height="1" fill="#ffffff"/>
<line x1="83" y1="523.5" x2="613" y2="523.5" stroke="#fff" stroke-width="1" stroke-dasharray="1 3"/>
<rect x="75" y="365" width="4" height="1" fill="#ffffff"/>
<rect x="616" y="365" width="4" height="1" fill="#ffffff"/>
<rect x="75" y="383" width="4" height="1" fill="#ffffff"/>
<rect x="616" y="383" width="4" height="1" fill="#ffffff"/>
<rect x="75" y="402" width="4" height="1" fill="#ffffff"/>
<rect x="616" y="402" width="4" height="1" fill="#ffffff"/>
<rect x="75" y="421" width="4" height="1" fill="#ffffff"/>
<rect x="616" y="421" width="4" height="1" fill="#ffffff"/>
<rect x="75" y="439" width="4" height="1" fill="#ffffff"/>
<rect x="616" y="439" width="4" height="1" fill="#ffffff"/>
<rect x="75" y="458" width="4" height="1" fill="#ffffff"/>
<rect x="616" y="458" width="4" height="1" fill="#ffffff"/>
<rect x="75" y="476" width="4" height="1" fill="#ffffff"/>
<rect x="616" y="476" width="4" height="1" fill="#ffffff"/>
<rect x="75" y="495" width="4" height="1" fill="#ffffff"/>
<rect x="616" y="495" width="4" height="1" fill="#ffffff"/>
<rect x="75" y="514" width="4" height="1" fill="#ffffff"/>
<rect x="616" y="514" width="4" height="1" fill="#ffffff"/>
<rect x="75" y="532" width="4" height="1" fill="#ffffff"/>
<rect x="616" y="532" width="4" height="1" fill="#ffffff"/>
<rect x="374" y="369" width="5" height="1" fill="#ff00ff"/>
<rect x="380" y="369" width="2" height="1" fill="#ff00ff"/>
<rect x="392" y="369" width="2" height="1" fill="#ff00ff"/>
<rect x="402" y="369" width="8" height="1" fill="#ff00ff"/>
<rect x="412" y="369" width="4" height="1" fill="#ff00ff"/>
<rect x="417" y="369" width="14" height="1" fill="#ff00ff"/>
<rect x="433" y="369" width="9" height="1" fill="#ff00ff"/>
<rect x="443" y="369" width="4" height="1" fill="#ff00ff"/>
<rect x="448" y="369" width="2" height="1" fill="#ff00ff"/>
<rect x="452" y="369" width="3" height="1" fill="#ff00ff"/>
<rect x="463" y="369" width="3" height="1" fill="#ff00ff"/>
<rect x="466" y="369" width="16" height="1" fill="#ff00ff"/>
<rect x="483" y="369" width="12" height="1" fill="#ff00ff"/>
<rect x="497" y="369" width="3" height="1" fill="#ff00ff"/>
<rect x="501" y="369" width="3" height="1" fill="#ff00ff"/>
<rect x="505" y="369" width="2" height="1" fill="#ff00ff"/>
<rect x="523" y="369" width="2" height="1" fill="#ff00ff"/>
<rect x="526" y="369" width="4" height="1" fill="#ff00ff"/>
<rect x="548" y="369" width="3" height="1" fill="#ff00ff"/>
<rect x="554" y="369" width="4" height="1" fill="#ff00ff"/>
<rect x="577" y="369" width="4" height="1" fill="#ff00ff"/>
<polyline points="75.5,383.5 601.5,383.5" fill="none" stroke="#00a8ff" stroke-width="1"/>
<polyline points="601.5,384.5 602.5,384.5 603.5,385.5 604.5,385.5 605.5,386.5 613.5,386.5" fill="none" stroke="#ff0000" stroke-width="1"/>
<polyline points="614.5,387.5 616.5,387.5 618.5,385.5 618.5,384.5" fill="none" stroke="#ff0000" stroke-width="1"/>
<polyline points="75.5,409.5 598.5,409.5" fill="none" stroke="#ff8c00" stroke-width="1"/>
<polyline points="597.5,408.5 599.5,408.5 602.5,405.5 603.5,405.5 604.5,404.5 612.5,404.5" fill="none" stroke="#ff8c00" stroke-width="1"/>
<polyline points="613.5,403.5 616.5,403.5" fill="none" stroke="#ff8c00" stroke-width="1"/>
<polyline points="616.5,401.5 618.5,399.5" fill="none" stroke="#aaaaaa" stroke-width="1"/>
<polyline points="75.5,417.5 600.5,417.5" fill="none" stroke="#55b200" stroke-width="1"/>
<polyline points="599.5,416.5 601.5,416.5 602.5,415.5 606.5,415.5 607.5,416.5 619.5,416.5" fill="none" stroke="#55b200" stroke-width="1"/>
<polyline points="75.5,441.5 599.5,441.5" fill="none" stroke="#ff0000" stroke-width="1"/>
<polyline points="600.5,442.5 603.5,442.5 604.5,441.5 605.5,440.5 615.5,440.5 617.5,439.5" fill="none" stroke="#ff0000" stroke-width="1"/>
<rect x="616" y="439" width="1" height="1" fill="#fff"/>
<rect x="618" y="439" width="1" height="1" fill="#00a8ff"/>
<polyline points="75.5,451.5 598.5,451.5 600.5,452.5 605.5,457.5 607.5,458.5 613.5,458.5 614.5,457.5 616.5,457.5" fill="none" stroke="#999999" stroke-width="1"/>
<rect x="599" y="452" width="2" height="2" fill="#999999"/>
<polyline points="75.5,477.5 406.5,477.5" fill="none" stroke="#ff00ff" stroke-width="1"/>
<polyline points="407.5,476.5 484.5,476.5" fill="none" stroke="#ff00ff" stroke-width="1"/>
<polyline points="485.5,476.5 598.5,476.5" fill="none" stroke="#55b200" stroke-width="1"/>
<polyline points="599.5,477.5 602.5,480.5 602.5,481.5" fill="none" stroke="#ff00ff" stroke-width="1"/>
<rect x="602" y="483" width="3" height="1" fill="#ff00ff"/>
<rect x="603" y="484" width="1" height="1" fill="#ff00ff"/>
<rect x="606" y="485" width="13" height="3" fill="#ff00ff"/>
<polyline points="75.5,502.5 601.5,502.5" fill="none" stroke="#ff0000" stroke-width="1"/>
<polyline points="600.5,501.5 602.5,501.5" fill="none" stroke="#ff0000" stroke-width="1"/>
<polyline points="603.5,499.5 605.5,497.5 613.5,497.5 616.5,499.5" fill="none" stroke="#ff0000" stroke-width="1"/>
<polyline points="75.5,515.5 598.5,515.5 600.5,516.5 602.5,518.5" fill="none" stroke="#ff8c00" stroke-width="1"/>
<polyline points="602.5,519.5 604.5,520.5 606.5,521.5 611.5,521.5 613.5,520.5 615.5,519.5" fill="none" stroke="#ff8c00" stroke-width="1"/>
<polyline points="603.5,520.5 605.5,521.5 607.5,522.5 611.5,522.5 613.5,521.5 614.5,520.5" fill="none" stroke="#ff8c00" stroke-width="1"/>
<polyline points="616.5,518.5 617.5,515.5 617.5,514.5" fill="none" stroke="#ff8c00" stroke-width="1"/>
<rect x="616" y="514" width="1" height="1" fill="#fff"/>
<polyline points="75.5,530.5 599.5,530.5 601.5,532.5 602.5,532.5" fill="none" stroke="#55b200" stroke-width="1"/>
<polyline points="606.5,532.5 618.5,532.5" fill="none" stroke="#55b200" stroke-width="1"/>
<rect x="603" y="532" width="2" height="1" fill="#ff00ff"/>
<rect x="621" y="357" width="3" height="9" fill="#55b200"/>
<rect x="621" y="366" width="3" height="9" fill="#ff00ff"/>
<rect x="621" y="375" width="3" height="9" fill="#00a8ff"/>
<rect x="621" y="384" width="3" height="10" fill="#ff0000"/>
<rect x="621" y="394" width="3" height="9" fill="#999999"/>
<rect x="621" y="403" width="3" height="9" fill="#ff8c00"/>
<rect x="621" y="412" width="3" height="10" fill="#55b200"/>
<rect x="621" y="422" width="3" height="9" fill="#ff00ff"/>
<rect x="621" y="431" width="3" height="9" fill="#00a8ff"/>
<rect x="621" y="440" width="3" height="10" fill="#ff0000"/>
<rect x="621" y="450" width="3" height="9" fill="#999999"/>
<rect x="621" y="459" width="3" height="9" fill="#ff8c00"/>
<rect x="621" y="468" width="3" height="9" fill="#55b200"/>
<rect x="621" y="477" width="3" height="10" fill="#ff00ff"/>
<rect x="621" y="487" width="3" height="9" fill="#00a8ff"/>
<rect x="621" y="496" width="3" height="9" fill="#ff0000"/>
<rect x="621" y="505" width="3" height="9" fill="#999999"/>
<rect x="621" y="514" width="3" height="10" fill="#ff8c00"/>
<rect x="621" y="524" width="3" height="9" fill="#55b200"/>
<rect x="621" y="533" width="3" height="9" fill="#ff00ff"/>
<text x="628" y="369.0" class="t125">Spin/P_CK</text>
<text x="628" y="387.6" class="t125">-X_toSaturn</text>
<text x="628" y="406.2" class="t125">-Y_toSaturn</text>
<text x="628" y="424.8" class="t125">-Z_toSaturn</text>
<text x="628" y="443.4" class="t125">-X_toSun</text>
<text x="628" y="462.0" class="t125">-Y_toSun</text>
<text x="628" y="480.6" class="t125">-Z_toSun</text>
<text x="628" y="499.2" class="t125">-X_toNEP</text>
<text x="628" y="517.8" class="t125">-Y_toNEP</text>
<text x="628" y="536.4" class="t125">-Z_toNEP</text>
<text x="62" y="377" class="t10" text-anchor="middle">180°</text>
<text x="62" y="396" class="t10" text-anchor="middle">0°</text>
<text x="62" y="526" class="t10" text-anchor="middle">100°</text>
<text x="62" y="545" class="t10" text-anchor="middle">0°</text>
<text transform="translate(39.3,449.5) rotate(-90) scale(1,1.08)" class="t13 rot" text-anchor="middle">Cassini Attitude</text>
<text x="75" y="566" class="t125" text-anchor="middle">00:00</text>
<text x="75" y="597" class="t125" text-anchor="middle">33.70</text>
<text x="75" y="612" class="t125" text-anchor="middle">-1.06</text>
<text x="75" y="628" class="t125" text-anchor="middle">1400</text>
<text x="75" y="643" class="t125" text-anchor="middle">33.71</text>
<text x="211" y="566" class="t125" text-anchor="middle">06:00</text>
<text x="211" y="597" class="t125" text-anchor="middle">34.74</text>
<text x="211" y="612" class="t125" text-anchor="middle">-1.04</text>
<text x="211" y="628" class="t125" text-anchor="middle">1405</text>
<text x="211" y="643" class="t125" text-anchor="middle">34.75</text>
<text x="347" y="566" class="t125" text-anchor="middle">12:00</text>
<text x="347" y="597" class="t125" text-anchor="middle">35.74</text>
<text x="347" y="612" class="t125" text-anchor="middle">-1.02</text>
<text x="347" y="628" class="t125" text-anchor="middle">1410</text>
<text x="347" y="643" class="t125" text-anchor="middle">35.75</text>
<text x="483" y="566" class="t125" text-anchor="middle">18:00</text>
<text x="483" y="597" class="t125" text-anchor="middle">36.68</text>
<text x="483" y="612" class="t125" text-anchor="middle">-1.00</text>
<text x="483" y="628" class="t125" text-anchor="middle">1414</text>
<text x="483" y="643" class="t125" text-anchor="middle">36.70</text>
<text x="8" y="574" class="t125">UTC</text>
<text x="8" y="604" class="t125">R</text>
<text x="17" y="613" class="t125">satur</text>
<text x="8" y="620" class="t125">Lat</text>
<text x="8" y="635" class="t125">LT</text>
<text x="8" y="651" class="t125">L</text>
<text x="15" y="660" class="t125">saturn</text>
<text x="318" y="687" class="t11">Background Subtracted</text>
<text x="569" y="687" class="t106">in Stare Mode</text>
<text x="375.5" y="21" class="t16" text-anchor="middle">INCA H TOF Channels</text>
<text x="376" y="38" class="t115" text-anchor="middle">2012-033T00:00:00.000 - 2012-033T23:59:00.000 MIMI/APL</text>
</svg>
</body>
</html>
